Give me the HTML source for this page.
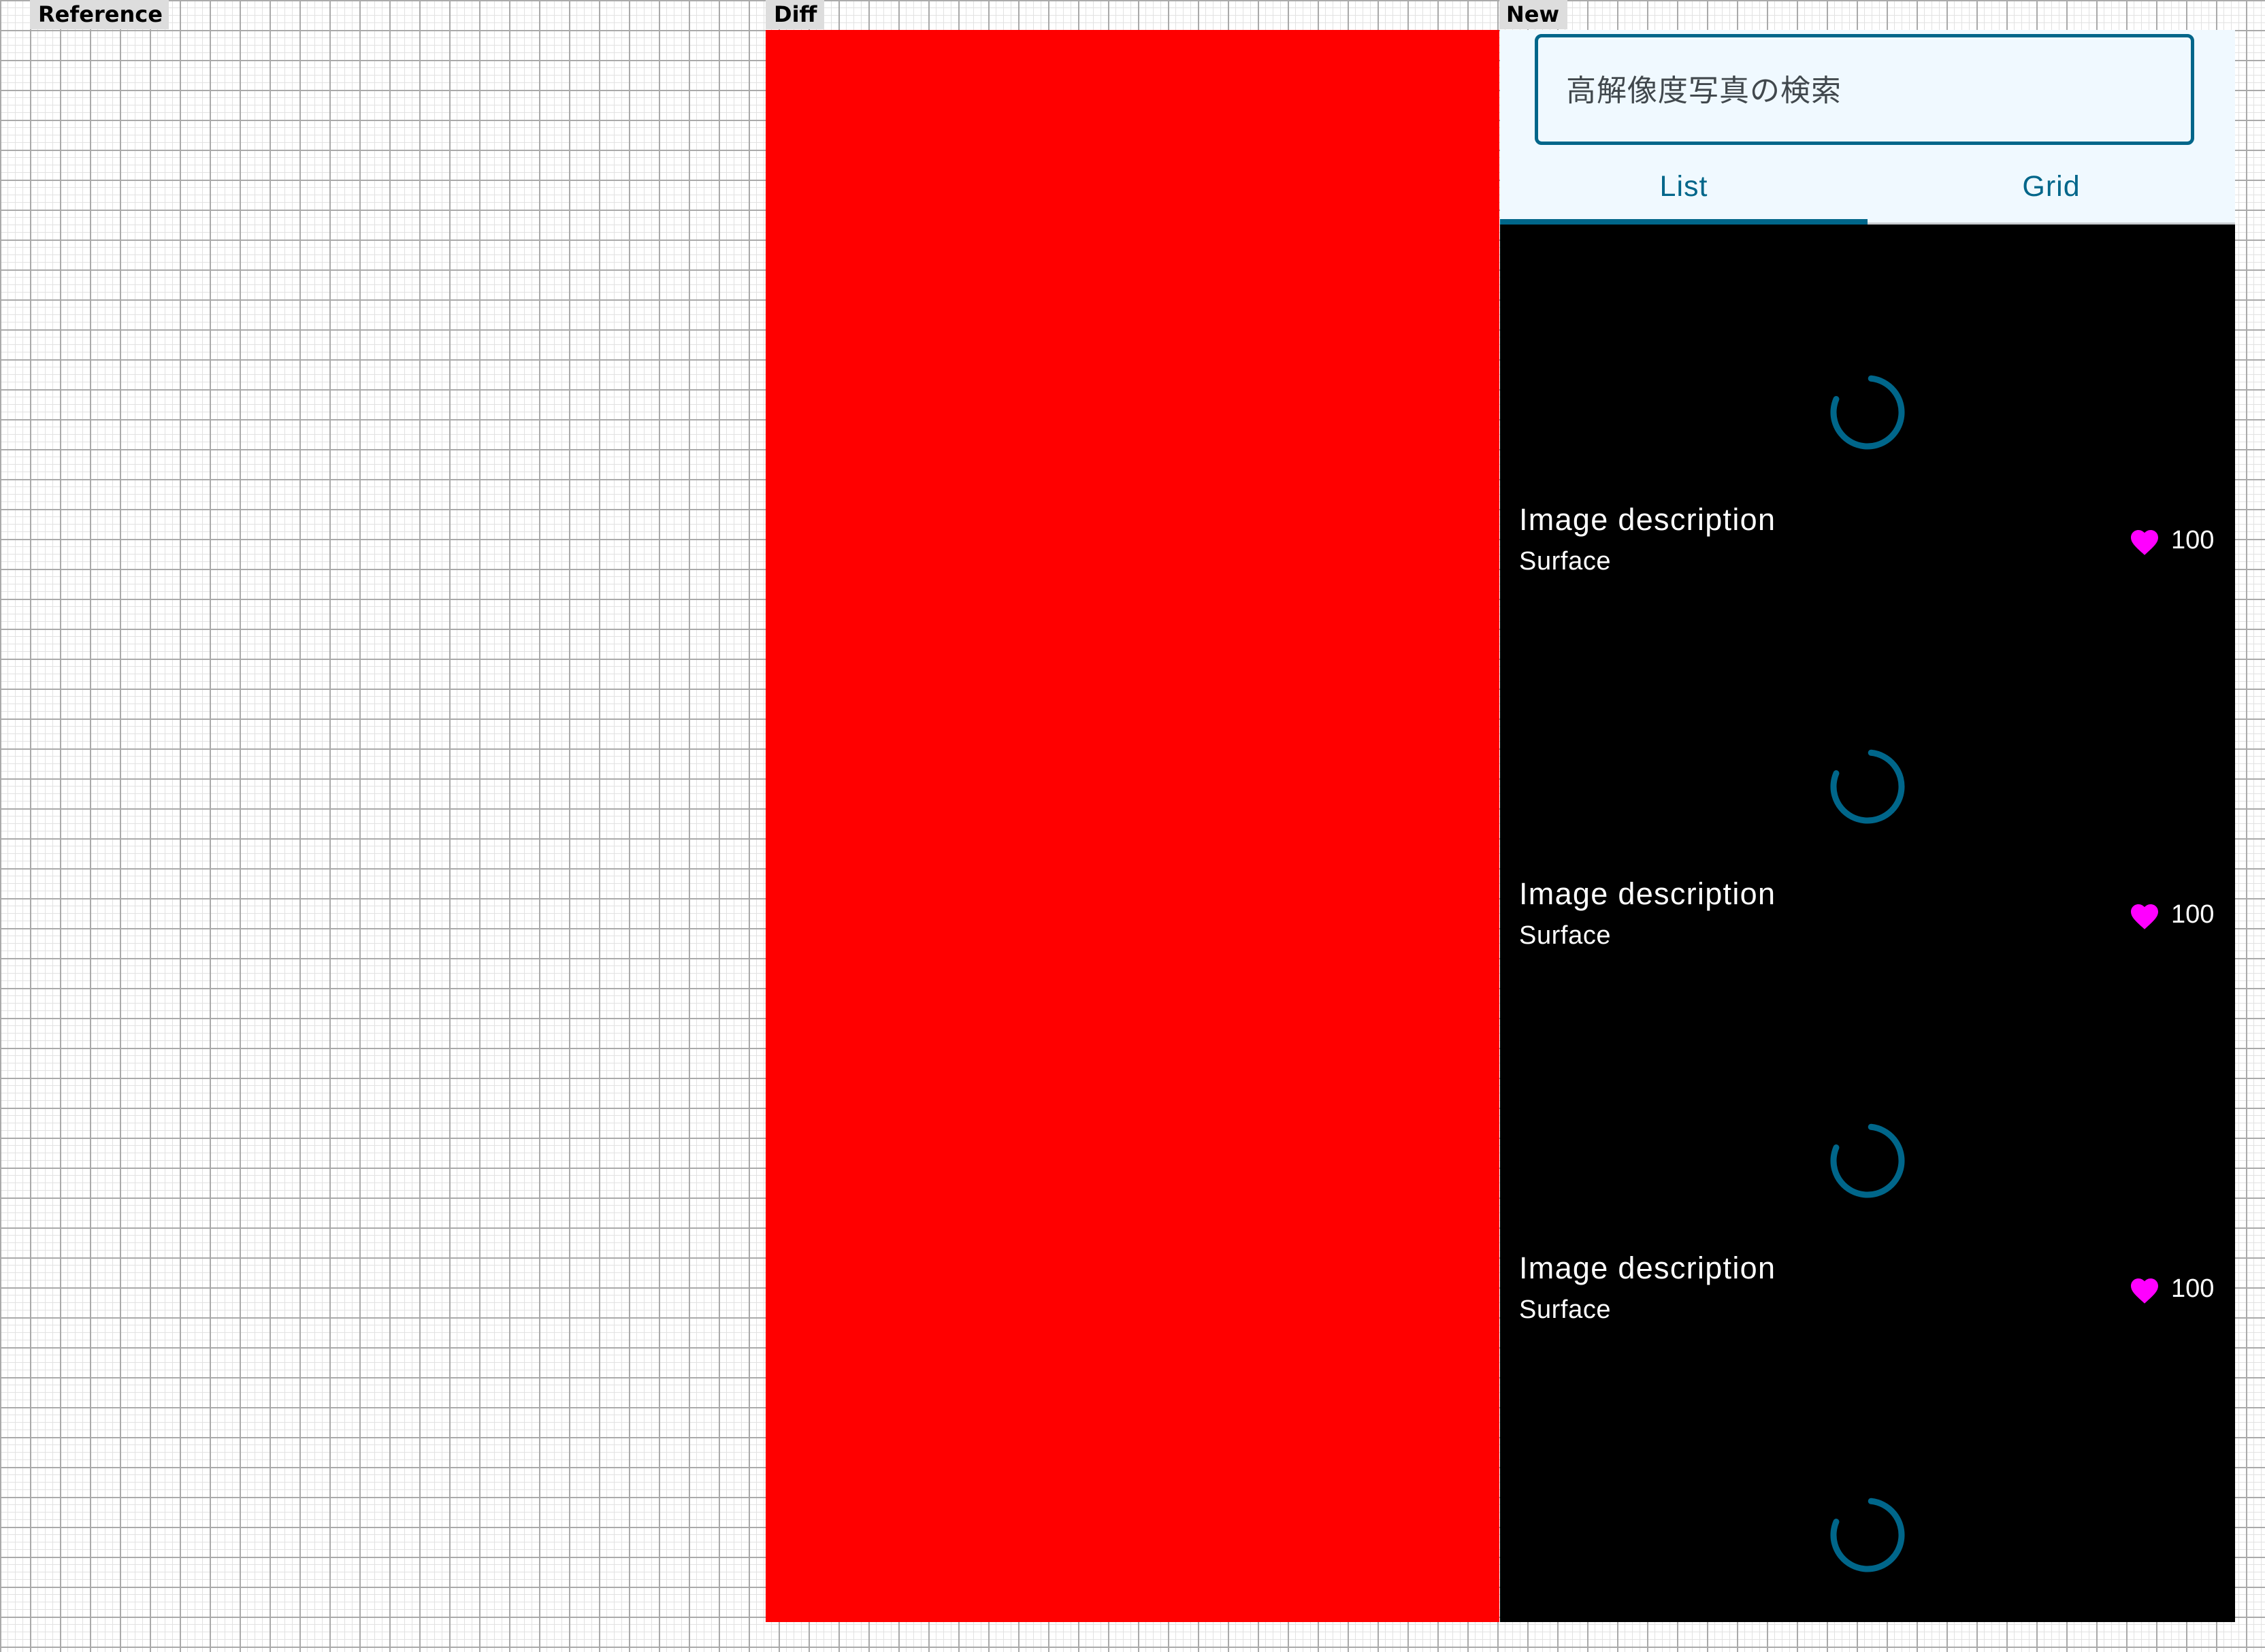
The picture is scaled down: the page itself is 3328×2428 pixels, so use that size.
<!DOCTYPE html>
<html><head><meta charset="utf-8"><style>
html,body{margin:0;padding:0}
body{width:3328px;height:2428px;position:relative;overflow:hidden;font-family:"Liberation Sans","Noto Sans CJK JP",sans-serif;
background-color:#fff;
background-image:
linear-gradient(to right,#aaa 2px,transparent 2px),
linear-gradient(to bottom,#aaa 2px,transparent 2px),
linear-gradient(to right,#e2e2e2 1px,transparent 1px),
linear-gradient(to bottom,#e2e2e2 1px,transparent 1px);
background-size:44px 44px,44px 44px,11px 11px,11px 11px;
background-position:0 0,0 0,0 0,0 0;}
.lbl{position:absolute;top:0;height:43px;background:#ddd;font-family:"DejaVu Sans",sans-serif;font-weight:bold;font-size:32px;line-height:43px;color:#000;padding:0 12px;box-sizing:border-box;white-space:nowrap}
.abs{position:absolute}
.item{position:absolute;left:0;width:1080px;height:550px}
.d1{position:absolute;left:28px;font-size:45px;color:#fff;white-space:nowrap;letter-spacing:1.3px}
.d2{position:absolute;left:28px;font-size:38px;color:#fff;white-space:nowrap;letter-spacing:0.6px}
.cnt{position:absolute;left:986px;font-size:38px;color:#fff}
</style></head><body>
<div class="lbl" style="left:44px;width:204px">Reference</div>
<div class="lbl" style="left:1125px;width:86px">Diff</div>
<div class="lbl" style="left:2203px;width:100px;padding:0 10px">New</div>

<div class="abs" style="left:1125px;top:44px;width:1078px;height:2340px;background:#ff0000"></div>

<div class="abs" style="left:2204px;top:44px;width:1080px;height:2340px;background:#000;overflow:hidden">
  <div class="abs" style="left:0;top:0;width:1080px;height:286px;background:#f0f9ff"></div>
  <div class="abs" style="left:51px;top:6px;width:969px;height:163px;border:5px solid #00668a;border-radius:10px;box-sizing:border-box"></div>
  <div class="abs" style="left:97px;top:62px;font-size:44px;color:#41484d;line-height:56px;letter-spacing:1px">高解像度写真の検索</div>
  <div class="abs" style="left:0;top:200px;width:540px;text-align:center;font-size:43px;color:#00668a;line-height:60px;letter-spacing:1px">List</div>
  <div class="abs" style="left:540px;top:200px;width:540px;text-align:center;font-size:43px;color:#00668a;line-height:60px;letter-spacing:1px">Grid</div>
  <div class="abs" style="left:0;top:283px;width:1080px;height:3px;background:#c8ccd0"></div>
  <div class="abs" style="left:0;top:278px;width:540px;height:8px;background:#00668a"></div>

  <div class="item" style="top:286px">
    <svg class="abs" style="left:480px;top:216px" width="120" height="120" viewBox="-60 -60 120 120"><circle r="50" fill="none" stroke="#00668a" stroke-width="9" stroke-linecap="round" stroke-dasharray="250 100" transform="rotate(-84)"/></svg>
    <div class="d1" style="top:408px">Image description</div>
    <div class="d2" style="top:474px">Surface</div>
    <svg class="abs" style="left:922px;top:443px" width="50" height="44" viewBox="0 0 24 22"><path d="M12 21.35l-1.45-1.32C5.4 15.36 2 12.28 2 8.5 2 5.42 4.42 3 7.5 3c1.74 0 3.41.81 4.5 2.09C13.09 3.81 14.76 3 16.5 3 19.58 3 22 5.42 22 8.5c0 3.78-3.4 6.86-8.55 11.54L12 21.35z" fill="#ff00ff"/></svg>
    <div class="cnt" style="top:443px">100</div>
  </div>
  <div class="item" style="top:836px">
    <svg class="abs" style="left:480px;top:216px" width="120" height="120" viewBox="-60 -60 120 120"><circle r="50" fill="none" stroke="#00668a" stroke-width="9" stroke-linecap="round" stroke-dasharray="250 100" transform="rotate(-84)"/></svg>
    <div class="d1" style="top:408px">Image description</div>
    <div class="d2" style="top:474px">Surface</div>
    <svg class="abs" style="left:922px;top:443px" width="50" height="44" viewBox="0 0 24 22"><path d="M12 21.35l-1.45-1.32C5.4 15.36 2 12.28 2 8.5 2 5.42 4.42 3 7.5 3c1.74 0 3.41.81 4.5 2.09C13.09 3.81 14.76 3 16.5 3 19.58 3 22 5.42 22 8.5c0 3.78-3.4 6.86-8.55 11.54L12 21.35z" fill="#ff00ff"/></svg>
    <div class="cnt" style="top:443px">100</div>
  </div>
  <div class="item" style="top:1386px">
    <svg class="abs" style="left:480px;top:216px" width="120" height="120" viewBox="-60 -60 120 120"><circle r="50" fill="none" stroke="#00668a" stroke-width="9" stroke-linecap="round" stroke-dasharray="250 100" transform="rotate(-84)"/></svg>
    <div class="d1" style="top:408px">Image description</div>
    <div class="d2" style="top:474px">Surface</div>
    <svg class="abs" style="left:922px;top:443px" width="50" height="44" viewBox="0 0 24 22"><path d="M12 21.35l-1.45-1.32C5.4 15.36 2 12.28 2 8.5 2 5.42 4.42 3 7.5 3c1.74 0 3.41.81 4.5 2.09C13.09 3.81 14.76 3 16.5 3 19.58 3 22 5.42 22 8.5c0 3.78-3.4 6.86-8.55 11.54L12 21.35z" fill="#ff00ff"/></svg>
    <div class="cnt" style="top:443px">100</div>
  </div>
  <div class="item" style="top:1936px">
    <svg class="abs" style="left:480px;top:216px" width="120" height="120" viewBox="-60 -60 120 120"><circle r="50" fill="none" stroke="#00668a" stroke-width="9" stroke-linecap="round" stroke-dasharray="250 100" transform="rotate(-84)"/></svg>
  </div>
</div>
</body></html>
